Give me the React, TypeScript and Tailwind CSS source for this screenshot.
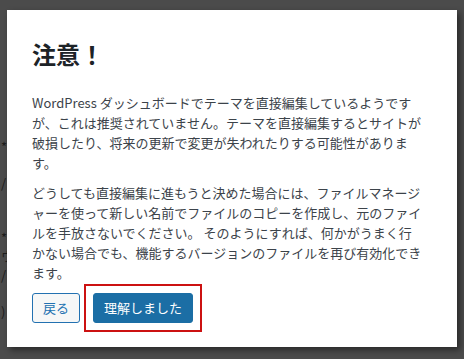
const BEHIND: { ch: string; mt: string }[] = [
  { ch: '*', mt: 'mt-[138px]' },
  { ch: '/', mt: 'mt-[18px]' },
  { ch: '*', mt: 'mt-[37px]' },
  { ch: 'ウ', mt: 'mt-0' },
  { ch: '/', mt: 'mt-[1px]' },
  { ch: ')', mt: 'mt-[19px]' },
];

export default function App() {
  return (
    <div
      className="flex h-[359px] w-[464px] overflow-hidden bg-[#4b4b4b]"
      style={{ fontFamily: '"Noto Sans CJK JP", "Noto Sans", sans-serif' }}
    >
      {/* page behind the overlay, mostly covered */}
      <div className="flex w-[7px] shrink-0 flex-col overflow-hidden pl-[1px] text-[13px] text-[#1c1c1c]">
        {BEHIND.map((g, i) => (
          <div key={i} className={`h-[18px] leading-[18px] ${g.mt}`}>
            {g.ch}
          </div>
        ))}
      </div>

      <div className="mt-[10px] h-[337px] w-[450px] shrink-0 bg-white pl-[25px] pr-[33px] pt-[28px] shadow-[3px_3px_6px_rgba(0,0,0,0.45)]">
        <h1 className="text-[24px] font-bold leading-[32px] text-[#1d2327]">注意！</h1>

        <div className="mt-[23px] text-[13px] leading-[20px] text-[#3c434a]">
          <p>
            WordPress
            ダッシュボードでテーマを直接編集しているようですが、これは推奨されていません。テーマを直接編集するとサイトが破損したり、将来の更新で変更が失われたりする可能性があります。
          </p>
          <p className="mt-[10px]">
            どうしても直接編集に進もうと決めた場合には、ファイルマネージャーを使って新しい名前でファイルのコピーを作成し、元のファイルを手放さないでください。
            そのようにすれば、何かがうまく行かない場合でも、機能するバージョンのファイルを再び有効化できます。
          </p>
        </div>

        <div className="mt-[1px] flex items-center gap-[4px]">
          <button
            type="button"
            className="h-[30px] rounded-[3px] border border-[#2271b1] bg-[#f6f7f7] px-[10px] text-[13px] text-[#2271b1]"
          >
            戻る
          </button>
          <div className="border-2 border-[#cc1111] p-[7px]">
            <button
              type="button"
              className="h-[30px] rounded-[3px] border border-[#1b6ea5] bg-[#1b6ea5] px-[10px] text-[13px] text-white"
            >
              理解しました
            </button>
          </div>
        </div>
      </div>
    </div>
  );
}
